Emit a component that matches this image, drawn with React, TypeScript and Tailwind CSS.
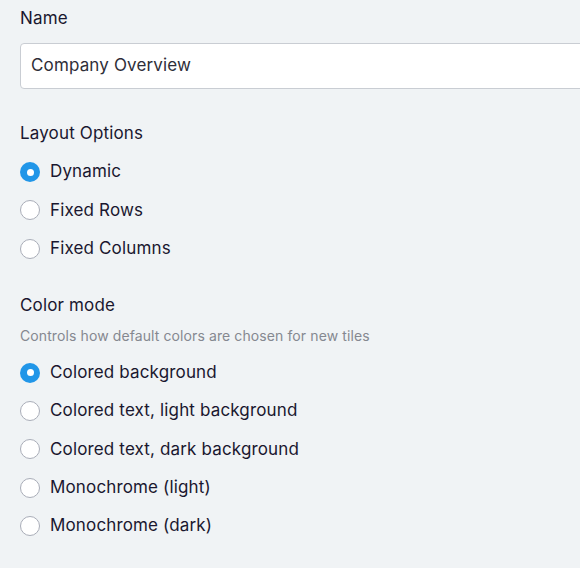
const layoutOptions = ['Dynamic', 'Fixed Rows', 'Fixed Columns']
const colorModes = [
  'Colored background',
  'Colored text, light background',
  'Colored text, dark background',
  'Monochrome (light)',
  'Monochrome (dark)',
]

function Radio({ label, checked }: { label: string; checked?: boolean }) {
  return (
    <label className="flex items-center gap-[10px] h-[38.25px]">
      {checked ? (
        <span className="w-5 h-5 rounded-full bg-[#2196e8] flex items-center justify-center">
          <span className="w-[7px] h-[7px] rounded-full bg-white" />
        </span>
      ) : (
        <span className="w-5 h-5 rounded-full bg-white border border-[#a9adb8]" />
      )}
      <span className="text-[17px] tracking-[0.15px] text-[#1a172f]">{label}</span>
    </label>
  )
}

export default function App() {
  return (
    <div
      className="w-[580px] h-[568px] overflow-hidden bg-[#f0f3f5] pl-5"
      style={{ fontFamily: 'Inter, "Noto Sans", sans-serif' }}
    >
      {/* Name */}
      <div className="pt-[6px] text-[17px] leading-6 tracking-[0.15px] text-[#1a172f]">Name</div>
      <div className="mt-[13px] w-[600px] h-[46px] bg-white border border-[#c9cdd3] rounded-[4px] flex items-center px-[10px] text-[17px] tracking-[0.15px] text-[#2e2e38]">
        Company Overview
      </div>

      {/* Layout options */}
      <div className="mt-[32px] text-[17px] leading-6 tracking-[0.15px] text-[#1a172f]">Layout Options</div>
      <div className="mt-[8px] flex flex-col">
        {layoutOptions.map((o, i) => (
          <Radio key={o} label={o} checked={i === 0} />
        ))}
      </div>

      {/* Color mode */}
      <div className="mt-[25px] text-[17px] leading-6 tracking-[0.15px] text-[#1a172f]">Color mode</div>
      <div className="mt-[9px] text-[14px] leading-5 tracking-[0.1px] text-[#858890]">
        Controls how default colors are chosen for new tiles
      </div>
      <div className="mt-[8px] flex flex-col">
        {colorModes.map((o, i) => (
          <Radio key={o} label={o} checked={i === 0} />
        ))}
      </div>
    </div>
  )
}
